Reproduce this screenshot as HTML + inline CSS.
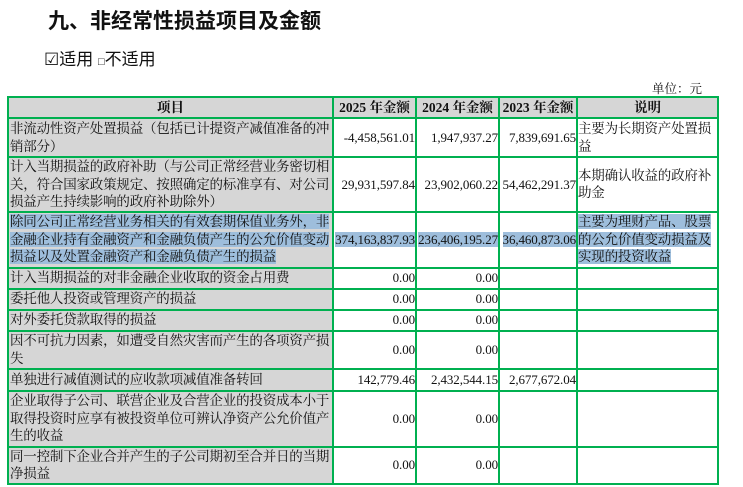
<!DOCTYPE html>
<html><head><meta charset="utf-8"><style>
body{margin:0;width:743px;height:487px;background:#fff;position:relative;overflow:hidden;font-family:"Liberation Serif","Noto Serif CJK SC",serif;color:#111}
.t{position:absolute;left:48px;top:5px;font:bold 21px "Liberation Sans","Noto Sans CJK SC",sans-serif}
.c{position:absolute;left:44px;top:45px;font:17px "Liberation Sans","Noto Sans CJK SC",sans-serif}
.u{position:absolute;left:652px;top:79px;font-size:12.5px}
table{position:absolute;left:7px;top:96px;width:710px;border-collapse:collapse;table-layout:fixed;font-size:13.5px;line-height:17.5px}
td{border:2px solid #00b050;padding:0 1px;vertical-align:middle;overflow:hidden;white-space:nowrap}
td.l{background:#d6d6d6;white-space:normal;text-align:left;letter-spacing:-0.2px}
td.n{text-align:right;padding:0;font-size:13px;letter-spacing:-0.1px}
td.d{white-space:normal;padding:0;letter-spacing:-0.2px}
th{border:2px solid #00b050;background:#d6d6d6;font-weight:bold;font-size:13.5px;padding:0;white-space:nowrap;overflow:hidden}
.h{background:#9ebedc}
</style></head><body>
<div class="t">九、非经常性损益项目及金额</div>
<div class="c">☑适用 <span style="font-size:11px">□</span>不适用</div>
<div class="u">单位：元</div>
<table>
<colgroup><col style="width:325px"><col style="width:83px"><col style="width:83px"><col style="width:78px"><col style="width:141px"></colgroup>
<tr style="height:21px"><th>项目</th><th>2025 年金额</th><th>2024 年金额</th><th>2023 年金额</th><th>说明</th></tr>
<tr style="height:39px"><td class="l">非流动性资产处置损益（包括已计提资产减值准备的冲销部分）</td><td class="n">-4,458,561.01</td><td class="n">1,947,937.27</td><td class="n">7,839,691.65</td><td class="d">主要为长期资产处置损益</td></tr>
<tr style="height:54px"><td class="l">计入当期损益的政府补助（与公司正常经营业务密切相关，符合国家政策规定、按照确定的标准享有、对公司损益产生持续影响的政府补助除外）</td><td class="n">29,931,597.84</td><td class="n">23,902,060.22</td><td class="n">54,462,291.37</td><td class="d">本期确认收益的政府补助金</td></tr>
<tr style="height:56px"><td class="l"><span class="h">除同公司正常经营业务相关的有效套期保值业务外，非金融企业持有金融资产和金融负债产生的公允价值变动损益以及处置金融资产和金融负债产生的损益</span></td><td class="n"><span class="h">374,163,837.93</span></td><td class="n"><span class="h">236,406,195.27</span></td><td class="n"><span class="h">36,460,873.06</span></td><td class="d"><span class="h">主要为理财产品、股票的公允价值变动损益及实现的投资收益</span></td></tr>
<tr style="height:21px"><td class="l">计入当期损益的对非金融企业收取的资金占用费</td><td class="n">0.00</td><td class="n">0.00</td><td></td><td></td></tr>
<tr style="height:21px"><td class="l">委托他人投资或管理资产的损益</td><td class="n">0.00</td><td class="n">0.00</td><td></td><td></td></tr>
<tr style="height:21px"><td class="l">对外委托贷款取得的损益</td><td class="n">0.00</td><td class="n">0.00</td><td></td><td></td></tr>
<tr style="height:38px"><td class="l">因不可抗力因素，如遭受自然灾害而产生的各项资产损失</td><td class="n">0.00</td><td class="n">0.00</td><td></td><td></td></tr>
<tr style="height:22px"><td class="l">单独进行减值测试的应收款项减值准备转回</td><td class="n">142,779.46</td><td class="n">2,432,544.15</td><td class="n">2,677,672.04</td><td></td></tr>
<tr style="height:56px"><td class="l">企业取得子公司、联营企业及合营企业的投资成本小于取得投资时应享有被投资单位可辨认净资产公允价值产生的收益</td><td class="n">0.00</td><td class="n">0.00</td><td></td><td></td></tr>
<tr style="height:37px"><td class="l">同一控制下企业合并产生的子公司期初至合并日的当期净损益</td><td class="n">0.00</td><td class="n">0.00</td><td></td><td></td></tr>
</table>
</body></html>
